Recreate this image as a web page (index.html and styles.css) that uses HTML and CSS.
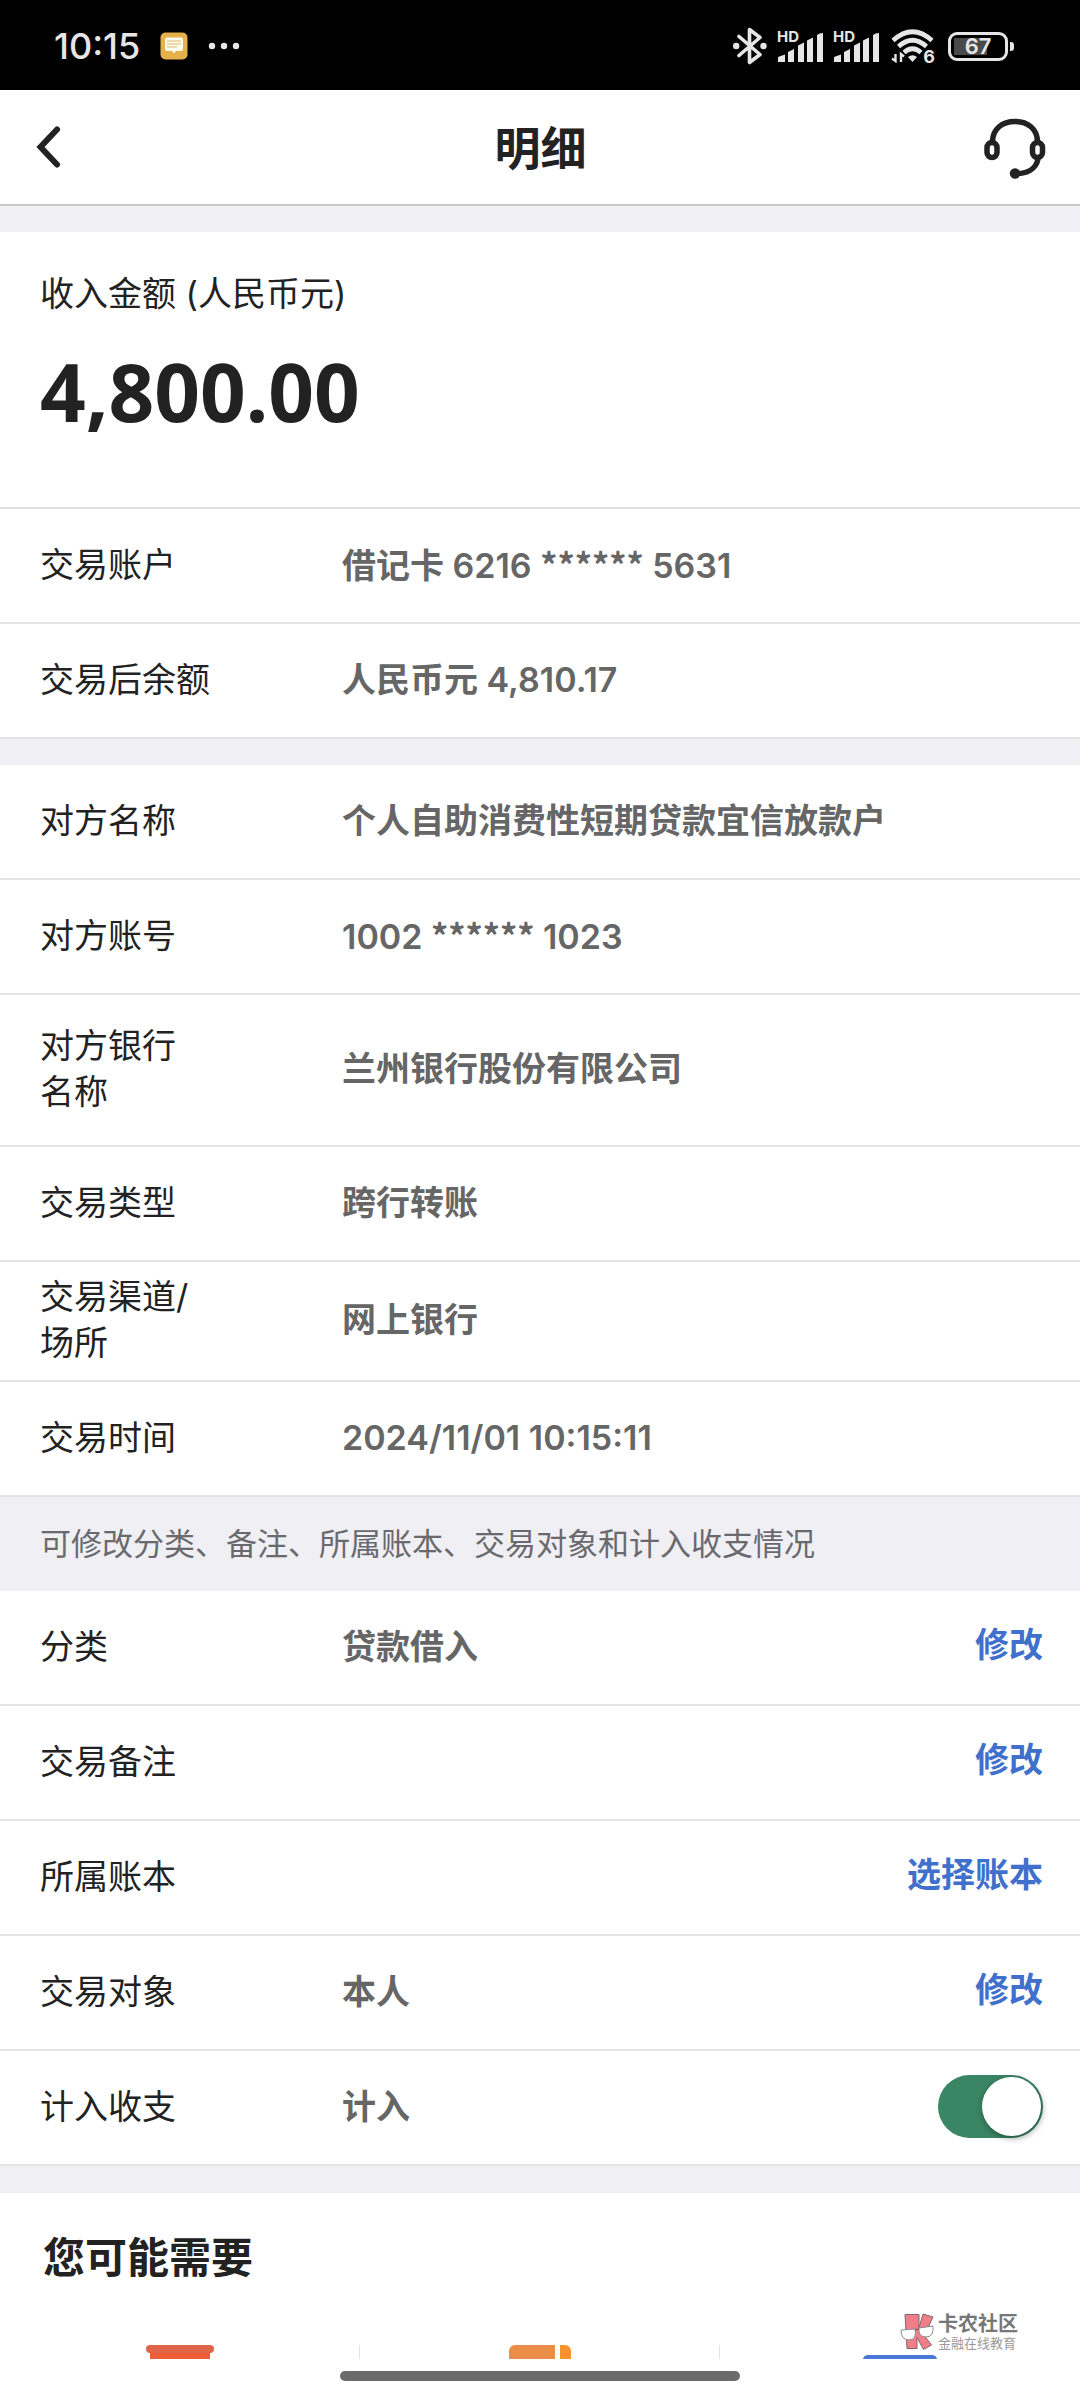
FILE: index.html
```html
<!DOCTYPE html>
<html lang="zh-CN">
<head>
<meta charset="utf-8">
<meta name="viewport" content="width=device-width, initial-scale=1">
<title>明细</title>
<link rel="stylesheet" href="styles.css">
</head>
<body>
<div class="status-bar">
  <div class="status-left">
    <span class="clock">10:15</span>
    <svg class="note-icon" width="28" height="28" viewBox="0 0 28 28" aria-hidden="true">
      <rect x="0.500" y="0.500" width="27" height="27" rx="5" fill="#e6b04a"/>
      <path d="M7 5.500h14a2 2 0 0 1 2 2v9.500a2 2 0 0 1-2 2h-5l-2 2.500-2-2.500H7a2 2 0 0 1-2-2V7.500a2 2 0 0 1 2-2z" fill="#fffdf0"/>
      <path d="M7 9h14M7 12h14M7 15h10" stroke="#e0b868" stroke-width="1.200"/>
    </svg>
    <svg width="32" height="8" viewBox="0 0 32 8" aria-hidden="true"><g fill="#e8e8e8"><circle cx="4" cy="4" r="3.200"/><circle cx="16" cy="4" r="3.200"/><circle cx="28" cy="4" r="3.200"/></g></svg>
  </div>
  <div class="status-right">
    <svg width="34" height="38" viewBox="0 0 34 38" aria-hidden="true">
      <path d="M6 9.500L27 27.500L16.500 35.500V2.500L27 10.500L6 28.500" fill="none" stroke="#e6e6e6" stroke-width="3.600" stroke-linejoin="round" stroke-linecap="round"/>
      <circle cx="3.200" cy="19" r="3.200" fill="#e6e6e6"/><circle cx="30.500" cy="19" r="3.200" fill="#e6e6e6"/>
    </svg>
    <span class="signal"><span class="hd">HD</span>
      <svg width="46" height="30" viewBox="0 0 46 30" aria-hidden="true"><path d="M1 25l7-2.500V30H1zM11 20l6-3V30h-6zM21 13.500l6-3V30h-6zM30 8.500l6-3V30h-6zM40 3q2-2 6-2V30h-6z" fill="#e6e6e6"/></svg>
    </span>
    <span class="signal"><span class="hd">HD</span>
      <svg width="46" height="30" viewBox="0 0 46 30" aria-hidden="true"><path d="M1 25l7-2.500V30H1zM11 20l6-3V30h-6zM21 13.500l6-3V30h-6zM30 8.500l6-3V30h-6zM40 3q2-2 6-2V30h-6z" fill="#e6e6e6"/></svg>
    </span>
    <span class="wifi">
      <svg width="44" height="34" viewBox="0 0 44 34" aria-hidden="true">
        <g fill="none" stroke="#e6e6e6" stroke-width="4.600"><path d="M2 11.500q19.500-17.500 39 0"/><path d="M7.500 17.500q14-12.500 28 0"/><path d="M13 23.500q8.500-7.500 17 0"/></g>
        <path d="M17 28q4.500-3.500 9 0L21.500 33z" fill="#e6e6e6"/>
        <path d="M4.500 25v7L1 29.500M10 33v-8l3 2.500" fill="none" stroke="#e6e6e6" stroke-width="2.400"/>
      </svg>
      <span class="wifi-gen">6</span>
    </span>
    <span class="battery"><span class="battery-body">67</span><span class="battery-tip"></span></span>
  </div>
</div>

<header class="nav">
  <button class="icon-button" type="button" aria-label="返回">
    <svg width="30" height="42" viewBox="0 0 30 42" aria-hidden="true"><path d="M24 3.500L7.500 21L24 38.500" fill="none" stroke="#222" stroke-width="6" stroke-linecap="round" stroke-linejoin="miter"/></svg>
  </button>
  <h1 class="nav-title">明细</h1>
  <button class="icon-button" type="button" aria-label="客服">
    <svg width="64" height="64" viewBox="0 0 64 64" aria-hidden="true">
      <g fill="none" stroke="#222" stroke-width="5.500" transform="translate(0 3)">
        <path d="M8.500 23C9 11 18 3.500 31 3.500S53 11 53.500 23"/>
        <rect x="3" y="24.500" width="10" height="15" rx="5"/><rect x="48.500" y="24.500" width="10" height="15" rx="5"/>
        <path d="M54 41C52 51 43 56 31 55.500"/>
      </g>
      <circle cx="31" cy="58.500" r="5.200" fill="#222"/>
    </svg>
  </button>
</header>

<main>
  <section class="card">
    <div class="amount">
      <p class="amount-label">收入金额 (人民币元)</p>
      <p class="amount-value">4,800.00</p>
    </div>
    <dl class="rows">
      <div class="row"><dt>交易账户</dt><dd>借记卡 6216 <span class="mask">******</span> 5631</dd></div>
      <div class="row"><dt>交易后余额</dt><dd>人民币元 4,810.17</dd></div>
    </dl>
  </section>

  <section class="card">
    <dl class="rows">
      <div class="row"><dt>对方名称</dt><dd>个人自助消费性短期贷款宜信放款户</dd></div>
      <div class="row"><dt>对方账号</dt><dd>1002 <span class="mask">******</span> 1023</dd></div>
      <div class="row row-tall"><dt>对方银行<br>名称</dt><dd>兰州银行股份有限公司</dd></div>
      <div class="row"><dt>交易类型</dt><dd>跨行转账</dd></div>
      <div class="row"><dt>交易渠道/<br>场所</dt><dd>网上银行</dd></div>
      <div class="row"><dt>交易时间</dt><dd>2024/11/01 10:15:11</dd></div>
    </dl>
  </section>

  <p class="hint">可修改分类、备注、所属账本、交易对象和计入收支情况</p>

  <section class="card card-edit">
    <dl class="rows">
      <div class="row"><dt>分类</dt><dd>贷款借入</dd><dd class="action"><button type="button">修改</button></dd></div>
      <div class="row"><dt>交易备注</dt><dd></dd><dd class="action"><button type="button">修改</button></dd></div>
      <div class="row"><dt>所属账本</dt><dd></dd><dd class="action"><button type="button">选择账本</button></dd></div>
      <div class="row"><dt>交易对象</dt><dd>本人</dd><dd class="action"><button type="button">修改</button></dd></div>
      <div class="row"><dt><label for="count-in">计入收支</label></dt><dd>计入</dd><dd class="action"><input class="switch" id="count-in" type="checkbox" role="switch" checked></dd></div>
    </dl>
  </section>

  <section class="card more">
    <h2>您可能需要</h2>
    <div class="services">
      <div class="service"><svg width="68" height="14" viewBox="0 0 68 14" aria-hidden="true"><path d="M4 6h60v8H4z" fill="#ee5c38"/><rect width="68" height="8" rx="4" fill="#e0664a"/></svg></div>
      <div class="service"><svg width="62" height="14" viewBox="0 0 62 14" aria-hidden="true"><path d="M0 14V6a6 6 0 0 1 6-6h40v14z" fill="#ea8d48"/><path d="M51 0h5a6 6 0 0 1 6 6v8H51z" fill="#f8922f"/></svg></div>
      <div class="service"><svg width="74" height="14" viewBox="0 0 74 14" aria-hidden="true"><path d="M0 14q1-4 5-4h64q4 0 5 4z" fill="#4a7ad8"/></svg></div>
    </div>
  </section>
</main>

<div class="brand-mark">
  <svg width="36" height="38" viewBox="0 0 36 38" aria-hidden="true">
    <g fill="#f07d88" stroke="#7a6a6c" stroke-width="1"><path d="M5 1.500h14v13l4-13.500 10 3-7 15-3 2 8.500 11-8 4.500-6.500-12v11H7z"/></g>
    <g fill="#fff" stroke="#8a8a8a" stroke-width="1"><path d="M1 17l14-1q2 11-6 11T1 17z"/><path d="M19 15l14-2q1 11-7 11t-7-9z"/></g>
    <path d="M15 17l4-1" stroke="#555" stroke-width="1"/>
  </svg>
  <div><p class="brand-name">卡农社区</p><p class="brand-sub">金融在线教育</p></div>
</div>
<div class="home-indicator"></div>
</body>
</html>
```

FILE: styles.css
```css
* { box-sizing: border-box; }

body {
  margin: 0;
  position: relative;
  background: #efeff4;
  color: #222;
  font-family: Inter, "Noto Sans CJK SC", sans-serif;
  font-size: 34px;
  line-height: 46px;
}

h1, h2, p, dl, dd { margin: 0; }

button {
  padding: 0;
  border: 0;
  background: none;
  color: inherit;
  font: inherit;
}

svg { display: block; }

.status-bar {
  display: flex;
  justify-content: space-between;
  align-items: center;
  height: 90px;
  padding: 2px 66px 0 54px;
  background: #000;
  color: #e6e6e6;
}

.status-left, .status-right { display: flex; align-items: center; }
.status-left { gap: 20px; }
.status-right { gap: 10px; }

.clock { font-size: 36px; font-weight: 500; }

.signal { position: relative; padding-top: 2px; }
.hd {
  position: absolute;
  left: 0;
  top: 0;
  font-size: 15px;
  line-height: 14px;
  font-weight: 700;
}

.wifi { position: relative; margin-left: 2px; }
.wifi-gen {
  position: absolute;
  right: 0;
  bottom: 0;
  font-size: 18px;
  line-height: 12px;
  font-weight: 700;
}

.battery { display: flex; align-items: center; gap: 2px; margin-left: 3px; }
.battery-body {
  width: 60px;
  height: 29px;
  border: 3px solid #e6e6e6;
  border-radius: 9px;
  background: linear-gradient(90deg, #4a4a4a 33px, transparent 33px) 3px 3px / 48px 17px no-repeat;
  font-size: 22px;
  line-height: 23px;
  font-weight: 600;
  text-align: center;
}
.battery-tip { width: 4px; height: 9px; border-radius: 0 3px 3px 0; background: #e6e6e6; }

.nav {
  display: flex;
  justify-content: space-between;
  align-items: center;
  height: 116px;
  padding: 0 32px 0 33px;
  border-bottom: 2px solid #c8c8c8;
  background: #fff;
}

.icon-button { display: flex; flex: 0 0 64px; }
.icon-button:last-child { justify-content: flex-end; }

.nav-title { padding-top: 2px; font-size: 46px; line-height: 60px; font-weight: 700; }

.card { margin-top: 26px; background: #fff; }
.card-edit { margin-top: 0; }

.amount { padding: 39px 40px 70px; border-bottom: 2px solid #e0e0e0; }
.amount-value {
  margin-top: 28px;
  font-family: "Noto Sans", "Open Sans", sans-serif;
  font-size: 80px;
  line-height: 92px;
  font-weight: 700;
}

.row {
  display: flex;
  align-items: center;
  min-height: 115px;
  padding: 12px 37px 14px 40px;
  border-bottom: 2px solid #e4e4e6;
}
.row-tall { min-height: 152px; }
.row dt { flex: 0 0 302px; }
.row dd { flex: 1; color: #666; font-weight: 600; }
.row .action { flex: none; color: #4070cc; }
.action button { display: block; padding-bottom: 4px; }
.mask { font-family: "Noto Sans CJK SC", sans-serif; }

.hint {
  padding: 24px 40px;
  color: #6a6a6e;
  font-size: 31px;
}

.switch {
  display: block;
  appearance: none;
  width: 105px;
  height: 63px;
  margin: 0;
  padding: 2px;
  border-radius: 32px;
  background: #3a8563;
}
.switch::before {
  content: "";
  display: block;
  width: 59px;
  height: 59px;
  border-radius: 50%;
  background: #fff;
  box-shadow: 1px 2px 6px rgba(0, 0, 0, .4);
}
.switch:checked::before { margin-left: auto; }

.more { padding: 35px 0 42px; margin-top: 27px; }
.more h2 { padding: 0 43px; font-size: 42px; line-height: 60px; font-weight: 700; }
.services { display: grid; grid-template-columns: repeat(3, 1fr); margin-top: 57px; }
.service { display: flex; justify-content: center; border-right: 1px solid #e2e2e2; }
.service:last-child { border-right: 0; }

.brand-mark {
  position: absolute;
  right: 62px;
  bottom: 50px;
  display: flex;
  align-items: center;
  gap: 2px;
  color: #777;
}
.brand-name { font-size: 20px; line-height: 22px; font-weight: 700; }
.brand-sub { color: #999; font-size: 13px; line-height: 16px; }

.home-indicator {
  position: absolute;
  left: 50%;
  bottom: 20px;
  width: 400px;
  height: 10px;
  margin-left: -200px;
  border-radius: 5px;
  background: #6b6b6b;
}
```
